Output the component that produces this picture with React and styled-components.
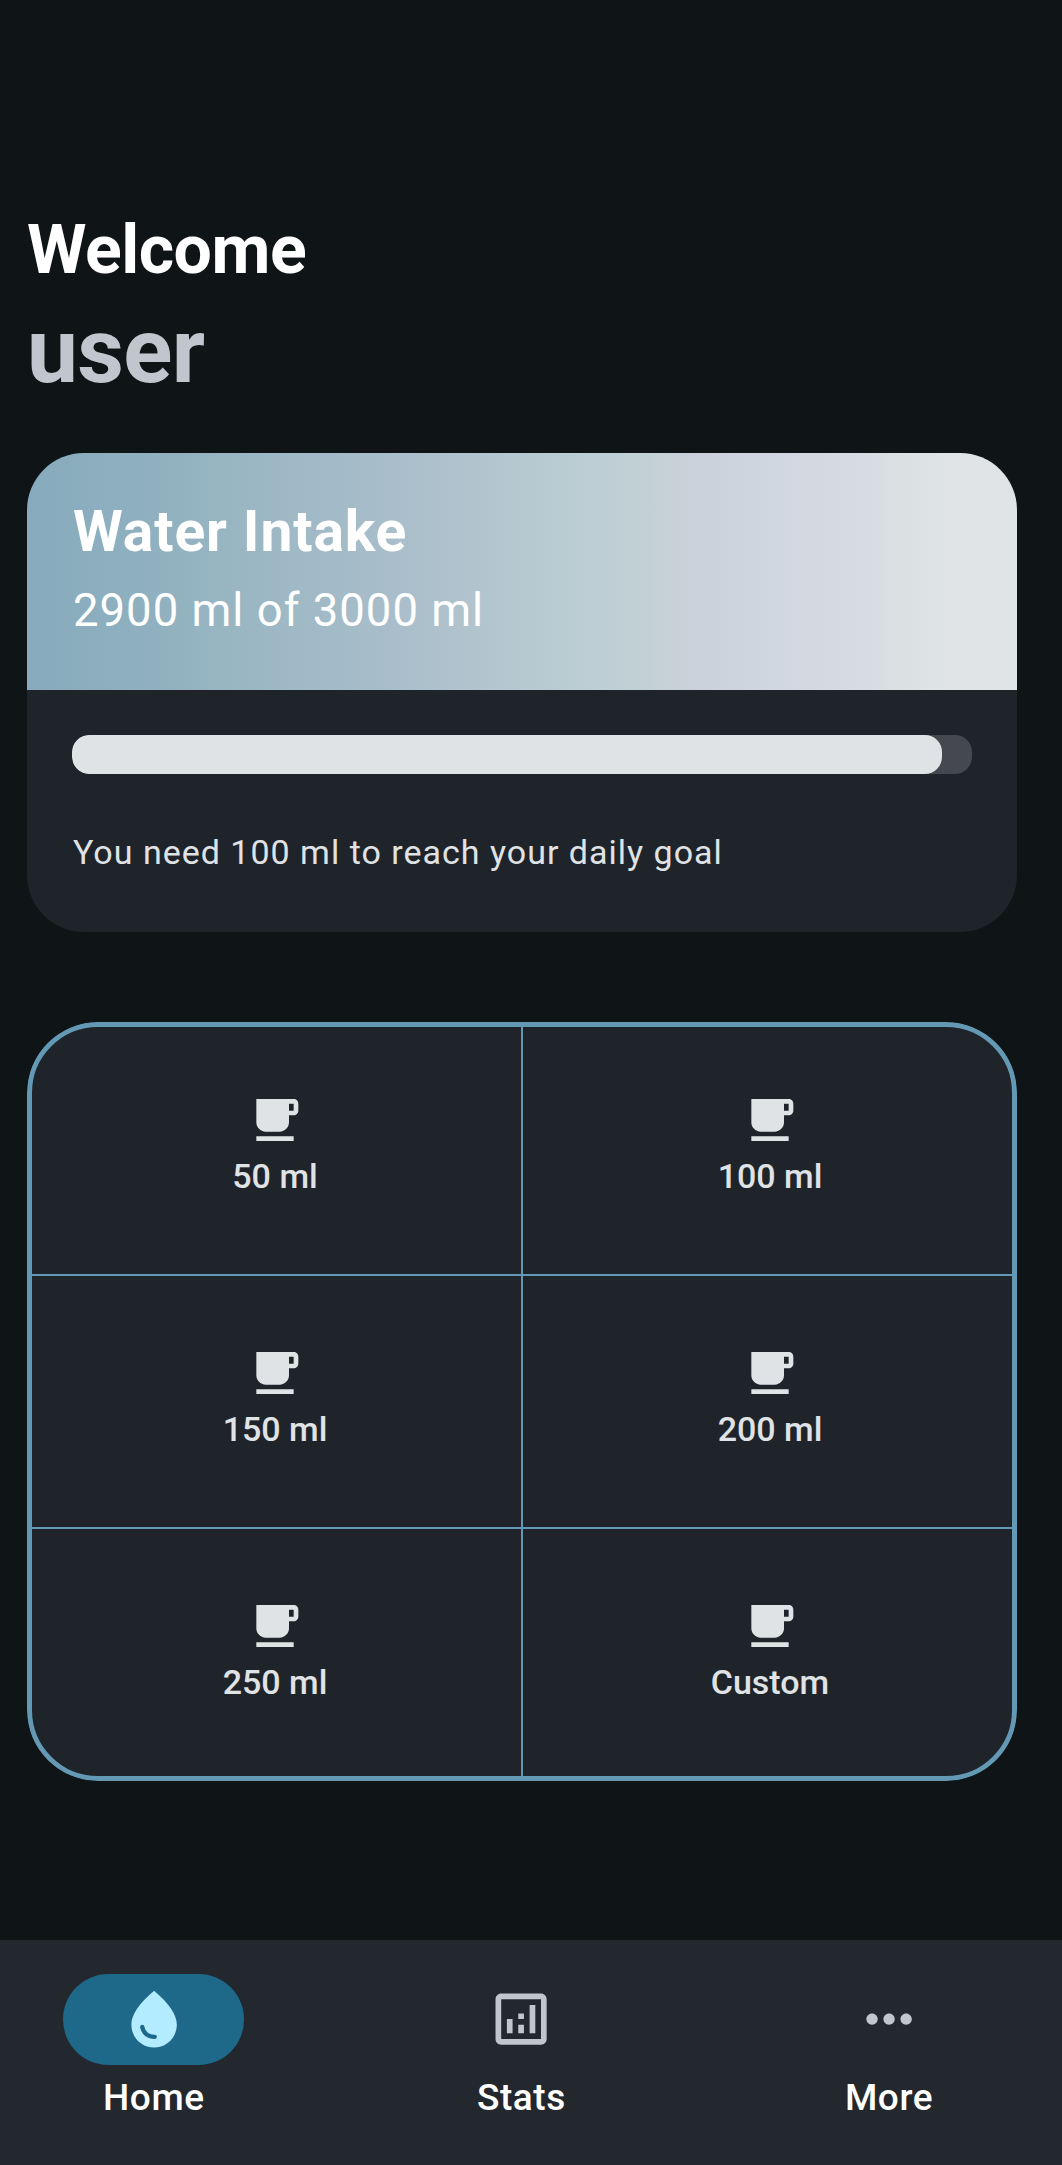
import React from "react";
import styled, { createGlobalStyle } from "styled-components";

const GlobalStyle = createGlobalStyle`
  * { box-sizing: border-box; }
  body {
    margin: 0;
    background: #0f1416;
    font-family: Roboto, "Liberation Sans", sans-serif;
  }
`;

const Screen = styled.div`
  display: flex;
  flex-direction: column;
  width: 1062px;
  height: 2165px;
  overflow: hidden;
  background: #0f1416;
`;

const Content = styled.main`
  flex: 1;
  padding: 210px 45px 0 27px;
`;

const Greeting = styled.h1`
  margin: 0 0 8px;
  font-size: 68px;
  line-height: 80px;
  font-weight: 700;
  letter-spacing: -0.5px;
  color: #fff;
`;

const UserName = styled.p`
  margin: 0 0 49px;
  font-size: 91px;
  line-height: 106px;
  font-weight: 700;
  letter-spacing: -0.7px;
  color: #c1c5ce;
`;

const Card = styled.section`
  height: 479px;
  border-radius: 57px;
  overflow: hidden;
  background: #1f242a;
`;

const CardHeader = styled.header`
  height: 237px;
  padding: 46px 46px 0;
  color: #fff;
  background: linear-gradient(
    90deg,
    #87abbd 0%,
    #8fb0bf 12%,
    #9bb7c3 23%,
    #a8bdca 36%,
    #b4c6cf 48%,
    #bccdd4 56%,
    #c3d1d6 63%,
    #cad1da 67%,
    #d1d7e0 76%,
    #d7dbe4 85%,
    #dadfe2 87%,
    #e0e4e7 93%
  );
`;

const CardTitle = styled.h2`
  margin: 0 0 19px;
  font-size: 57px;
  line-height: 66px;
  font-weight: 700;
  letter-spacing: 0.88px;
`;

const CardAmount = styled.p`
  margin: 0;
  font-size: 45.4px;
  line-height: 54px;
  letter-spacing: 1.04px;
`;

const CardBody = styled.div`
  padding: 45px 45px 0;
`;

const Track = styled.div`
  height: 39px;
  margin-bottom: 58px;
  border-radius: 17px;
  overflow: hidden;
  background: #45494f;
`;

const Fill = styled.div`
  height: 100%;
  border-radius: 17px;
  background: #e0e3e6;
`;

const Hint = styled.p`
  margin: 0;
  padding-left: 1px;
  font-size: 34px;
  line-height: 40px;
  letter-spacing: 1px;
  color: #e0e3e6;
`;

const AmountGrid = styled.section`
  position: relative;
  display: grid;
  grid-template-columns: 1fr 1fr;
  grid-auto-rows: 253px;
  margin-top: 90px;
  border-radius: 71px;
  overflow: hidden;
  background: #1f242a;

  &::after {
    content: "";
    position: absolute;
    inset: 0;
    border: 5px solid #6399b5;
    border-radius: inherit;
    pointer-events: none;
  }
`;

const AmountButton = styled.button`
  display: flex;
  flex-direction: column;
  align-items: center;
  gap: 7px;
  margin: 0;
  padding: ${(p) => (p.$first ? 70 : 69)}px 0 0;
  border: 0 solid #6399b5;
  border-top-width: ${(p) => (p.$first ? 0 : 1)}px;
  border-bottom-width: ${(p) => (p.$last ? 0 : 1)}px;
  background: none;
  font: 500 34px/40px Roboto, "Liberation Sans", sans-serif;
  color: #e0e3e6;

  &:nth-child(odd) {
    border-right-width: 1px;
    padding-left: 2px;
  }
  &:nth-child(even) { border-left-width: 1px; }
`;

const CupSvg = styled.svg`
  display: block;
  width: 56px;
  height: 56px;
  margin-bottom: 1px;
  fill: #e0e3e6;
`;

const NavBar = styled.nav`
  display: grid;
  grid-template-columns: repeat(3, 345px);
  column-gap: 22.6px;
  justify-content: end;
  height: 225px;
  padding: 34px 0.5px 0 0;
  background: #23272e;
`;

const NavItem = styled.a`
  display: flex;
  flex-direction: column;
  align-items: center;
  gap: 11px;
  font-size: 37px;
  line-height: 44px;
  font-weight: 500;
  letter-spacing: 0.55px;
  color: #fff;
`;

const Indicator = styled.span`
  display: flex;
  align-items: center;
  justify-content: center;
  width: 181px;
  height: 91px;
  border-radius: 46px;
  background: ${(p) => (p.$active ? "#1e698a" : "transparent")};
  color: ${(p) => (p.$active ? "#b3ebff" : "#c1c5ce")};
`;

const NavSvg = styled.svg`
  width: 68.2px;
  height: 68.2px;
  fill: currentColor;
`;

const amounts = ["50 ml", "100 ml", "150 ml", "200 ml", "250 ml", "Custom"];

const tabs = [
  {
    label: "Home",
    icon: "M12 2c-5.33 4.55-8 8.48-8 11.8 0 4.98 3.8 8.2 8 8.2s8-3.22 8-8.2c0-3.32-2.67-7.25-8-11.8zM7.83 14c.37 0 .67.26.74.62.41 2.22 2.28 2.98 3.64 2.87.43-.02.79.32.79.75 0 .4-.32.73-.72.75-2.13.13-4.62-1.09-5.19-4.12-.08-.45.28-.87.74-.87z",
  },
  {
    label: "Stats",
    icon: "M19 3H5c-1.1 0-2 .9-2 2v14c0 1.1.9 2 2 2h14c1.1 0 2-.9 2-2V5c0-1.1-.9-2-2-2zm0 16H5V5h14v14zM7 12h2v5H7zM15 7h2v10h-2zM11 14h2v3h-2zM11 10h2v2h-2z",
  },
  {
    label: "More",
    icon: "M6 10c-1.1 0-2 .9-2 2s.9 2 2 2 2-.9 2-2-.9-2-2-2zm12 0c-1.1 0-2 .9-2 2s.9 2 2 2 2-.9 2-2-.9-2-2-2zm-6 0c-1.1 0-2 .9-2 2s.9 2 2 2 2-.9 2-2-.9-2-2-2z",
  },
];

function Cup() {
  return (
    <CupSvg viewBox="0 0 24 24">
      <path d="M20 3H4v10c0 2.21 1.79 4 4 4h6c2.21 0 4-1.79 4-4v-3h2c1.11 0 2-.9 2-2V5c0-1.11-.89-2-2-2zm0 5h-2V5h2v3zM4 19h16v2H4z" />
    </CupSvg>
  );
}

export default function App() {
  const drunk = 2900;
  const goal = 3000;
  return (
    <>
      <GlobalStyle />
      <Screen>
        <Content>
          <Greeting>Welcome</Greeting>
          <UserName>user</UserName>
          <Card>
            <CardHeader>
              <CardTitle>Water Intake</CardTitle>
              <CardAmount>{`${drunk} ml of ${goal} ml`}</CardAmount>
            </CardHeader>
            <CardBody>
              <Track>
                <Fill style={{ width: `${(drunk / goal) * 100}%` }} />
              </Track>
              <Hint>{`You need ${goal - drunk} ml to reach your daily goal`}</Hint>
            </CardBody>
          </Card>
          <AmountGrid>
            {amounts.map((label, i) => (
              <AmountButton key={label} $first={i < 2} $last={i > 3}>
                <Cup />
                {label}
              </AmountButton>
            ))}
          </AmountGrid>
        </Content>
        <NavBar>
          {tabs.map((tab, i) => (
            <NavItem key={tab.label}>
              <Indicator $active={i === 0}>
                <NavSvg viewBox="0 0 24 24">
                  <path d={tab.icon} />
                </NavSvg>
              </Indicator>
              {tab.label}
            </NavItem>
          ))}
        </NavBar>
      </Screen>
    </>
  );
}
